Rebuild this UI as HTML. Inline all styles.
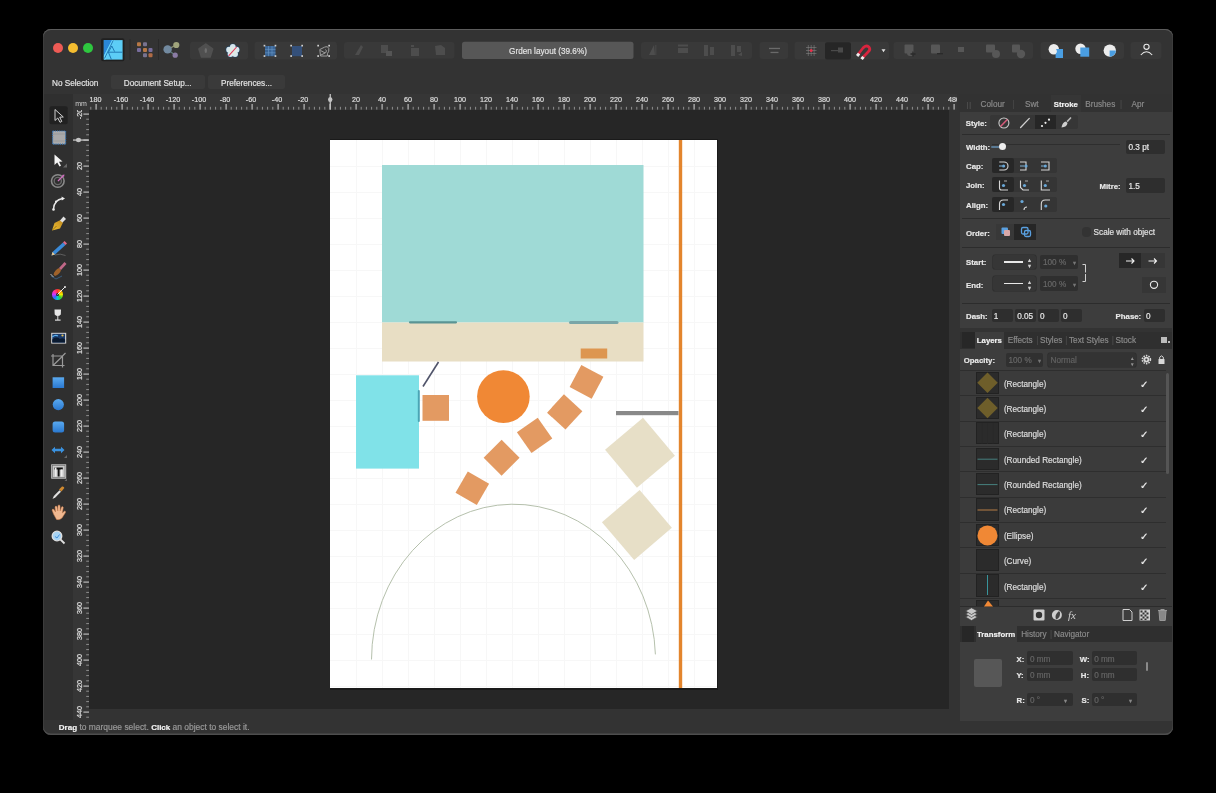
<!DOCTYPE html>
<html><head><meta charset="utf-8">
<style>
*{margin:0;padding:0;box-sizing:border-box}
html,body{width:1216px;height:793px;overflow:hidden;background:#000;font-family:"Liberation Sans",sans-serif;font-size:8.2px;color:#d8d8d8}
.a{position:absolute}
.t{white-space:nowrap;line-height:10px;-webkit-text-stroke:0.18px currentColor}
#clip{will-change:transform;position:absolute;left:0;top:0;width:1216px;height:793px;clip-path:inset(29px 43px 58px 43px round 8px)}
</style></head><body>
<div id="clip">
<div class="a" style="left:43px;top:29px;width:1130px;height:706px;background:#333"></div>
<div class="a" style="left:43px;top:29px;width:1130px;height:1px;background:#5a5a5a"></div>
<!-- traffic lights -->
<div class="a" style="left:53px;top:43px;width:10px;height:10px;border-radius:50%;background:#ee5b55"></div>
<div class="a" style="left:68px;top:43px;width:10px;height:10px;border-radius:50%;background:#f4bd30"></div>
<div class="a" style="left:83px;top:43px;width:10px;height:10px;border-radius:50%;background:#2ec73f"></div>
<!-- toolbar -->
<svg class="a" style="left:0;top:0" width="1216" height="70" viewBox="0 0 1216 70">
<defs>
<linearGradient id="afg" x1="0" y1="0" x2="1" y2="1"><stop offset="0" stop-color="#1a6fc8"/><stop offset="0.5" stop-color="#38b4ee"/><stop offset="1" stop-color="#6ad8f8"/></linearGradient>
</defs>
<!-- affinity logo -->
<rect x="101" y="38.3" width="23.5" height="23" rx="2" fill="#202020"/>
<rect x="103.8" y="40.1" width="18.8" height="19.5" fill="#5ccdf6"/>
<path d="M103.8 40.1 L112 40.1 L103.8 56 Z" fill="#2a88d8"/>
<path d="M112 40.1 L114.5 40.1 L105.5 59.6 L103.8 59.6 L103.8 56 Z" fill="#6ad4fa"/>
<g stroke="#1a6fae" stroke-width="0.9" fill="none">
<path d="M113.3 40.3 L104.5 58.5"/><path d="M111.8 46 L108.4 52.2 L111.4 59.5"/><path d="M108.4 52.2 L122.5 52.2"/><path d="M111.8 46 L114.6 51.6"/>
</g>
<!-- separators -->
<rect x="129.5" y="39" width="1" height="21" fill="#2a2a2a"/>
<rect x="158" y="39" width="1" height="21" fill="#2a2a2a"/>
<!-- pixel persona -->
<g opacity="0.8">
<rect x="137" y="42.3" width="4" height="4" rx="1" fill="#d98a4a"/>
<rect x="143" y="42.3" width="4" height="4" rx="1" fill="#8a84a8"/>
<rect x="137" y="48.1" width="4" height="4" rx="1" fill="#8a7cb8"/>
<rect x="143" y="48.1" width="4" height="4" rx="1" fill="#d98a4a"/>
<rect x="148.5" y="48.1" width="4" height="4" rx="1" fill="#8a7cb8"/>
<rect x="143" y="53.2" width="4" height="4" rx="1" fill="#8a84a8"/>
<rect x="148.5" y="53.2" width="4" height="4" rx="1" fill="#d07a4a"/>
</g>
<!-- export persona -->
<g opacity="0.85">
<line x1="167.6" y1="49.4" x2="176.3" y2="45" stroke="#9aa07a" stroke-width="1.2"/>
<line x1="167.6" y1="49.4" x2="175.2" y2="55.2" stroke="#6a8a88" stroke-width="1.2"/>
<circle cx="167.6" cy="49.4" r="4.2" fill="#7e9ab4"/>
<circle cx="176.3" cy="45" r="3.1" fill="#b4b888"/>
<circle cx="175.2" cy="55.2" r="2.6" fill="#9a88b8"/>
</g>
<!-- group bgs -->
<g fill="#393939">
<rect x="190" y="41.8" width="58" height="17.6" rx="3"/>
<rect x="254.5" y="41.8" width="82.5" height="17.6" rx="3"/>
<rect x="344" y="42" width="110.5" height="16.8" rx="3"/>
<rect x="641" y="42" width="111" height="17" rx="3"/>
<rect x="759.5" y="42" width="28.7" height="17" rx="3"/>
<rect x="794.5" y="41.8" width="94.5" height="17.8" rx="3"/>
<rect x="893.5" y="42" width="139.5" height="17" rx="3"/>
<rect x="1040.5" y="42" width="83.5" height="17" rx="3"/>
<rect x="1130.5" y="42" width="31" height="17" rx="3"/>
</g>
<!-- title box -->
<rect x="462" y="41.8" width="171.5" height="17.2" rx="2.5" fill="#575757"/>
<text x="548" y="53.6" font-size="8.2" fill="#e6e6e6" stroke="#e6e6e6" stroke-width="0.15" text-anchor="middle" font-family="Liberation Sans">Grden layout (39.6%)</text>
<!-- pentagon disabled -->
<path d="M205.80 44.20 L212.46 49.04 L209.91 56.86 L201.69 56.86 L199.14 49.04 Z" fill="#505050" stroke="#505050" stroke-width="2" stroke-linejoin="round"/>
<ellipse cx="205.8" cy="50.5" rx="1.2" ry="2.6" fill="#6e6e6e"/>
<!-- flower -->
<g><circle cx="232.80" cy="47.00" r="3.6" fill="#24405a"/><circle cx="236.51" cy="49.69" r="3.6" fill="#24405a"/><circle cx="235.09" cy="54.06" r="3.6" fill="#24405a"/><circle cx="230.51" cy="54.06" r="3.6" fill="#24405a"/><circle cx="229.09" cy="49.69" r="3.6" fill="#24405a"/><circle cx="232.8" cy="50.9" r="4.6" fill="#24405a"/><circle cx="232.80" cy="47.00" r="2.9" fill="#d6e6ee"/><circle cx="236.51" cy="49.69" r="2.9" fill="#d6e6ee"/><circle cx="235.09" cy="54.06" r="2.9" fill="#d6e6ee"/><circle cx="230.51" cy="54.06" r="2.9" fill="#d6e6ee"/><circle cx="229.09" cy="49.69" r="2.9" fill="#d6e6ee"/><circle cx="232.8" cy="50.9" r="4" fill="#dfeae6"/>
<line x1="228.6" y1="55.8" x2="236.6" y2="47" stroke="#e03a5a" stroke-width="1.1"/></g>
<!-- selection icons -->
<g>
<rect x="265" y="46" width="10.5" height="10.2" fill="#3a6494"/>
<g stroke="#6a98c8" stroke-width="0.6"><line x1="268.5" y1="46" x2="268.5" y2="56.2"/><line x1="272" y1="46" x2="272" y2="56.2"/><line x1="265" y1="49.4" x2="275.5" y2="49.4"/><line x1="265" y1="52.8" x2="275.5" y2="52.8"/></g>
<g fill="#d0d0d0"><rect x="263.6" y="44.8" width="1.7" height="1.7"/><rect x="274.6" y="44.8" width="1.7" height="1.7"/><rect x="263.6" y="55.2" width="1.7" height="1.7"/><rect x="274.6" y="55.2" width="1.7" height="1.7"/></g>
<rect x="292" y="46" width="10" height="10.2" fill="#34507a"/>
<g fill="#d0d0d0"><rect x="290.3" y="44.8" width="1.7" height="1.7"/><rect x="301.3" y="44.8" width="1.7" height="1.7"/><rect x="290.3" y="55.2" width="1.7" height="1.7"/><rect x="301.3" y="55.2" width="1.7" height="1.7"/></g>
<path d="M319.8 49.5 L324.5 47.2 Q327.8 45.8 328.8 48.5 Q329.3 51.5 327.5 53.5 L327.3 56 L320.5 56 Z M320.5 50.5 L325.2 53 L320.5 55.2 M325.5 49.5 Q327.5 50.5 325.5 53" stroke="#a8a8a8" stroke-width="0.9" fill="none"/>
<g fill="#d0d0d0"><rect x="317.3" y="44.8" width="1.7" height="1.7"/><rect x="328.3" y="44.8" width="1.7" height="1.7"/><rect x="317.3" y="55.2" width="1.7" height="1.7"/><rect x="328.3" y="55.2" width="1.7" height="1.7"/></g>
</g>
<!-- disabled arrange -->
<g fill="#4d4d4d">
<path d="M355 55 L361 45 L363 47 L359 55 Z"/>
<rect x="381" y="45" width="7" height="8"/><rect x="386" y="51" width="6" height="5" fill="#555"/>
<rect x="411" y="48" width="8" height="8"/><rect x="411" y="45" width="3" height="2"/>
<path d="M435 46 L441 45 L445 48 L445 55 L436 55 Z"/>
</g>
<!-- align group disabled -->
<g fill="#4d4d4d">
<path d="M649 55 L654 45 L655 55 Z"/><rect x="655" y="45" width="1.5" height="10" fill="#444"/>
<rect x="678" y="44.5" width="10" height="2" /><rect x="678" y="48" width="10" height="5"/>
<rect x="704" y="45" width="4" height="11"/><rect x="710" y="47" width="4" height="8"/>
<rect x="731" y="45" width="4" height="11"/><rect x="737" y="46" width="4" height="6"/><path d="M738 55 L742 52 L742 56 Z"/>
</g>
<g fill="#6a6a6a"><rect x="769" y="47.8" width="11" height="1.3"/><rect x="770.5" y="51.8" width="8" height="1.3"/></g>
<!-- snapping grid -->
<g stroke="#a8a8a8" stroke-width="0.55" opacity="0.7"><line x1="806" y1="47.5" x2="816.5" y2="47.5"/><line x1="806" y1="50.5" x2="816.5" y2="50.5"/><line x1="806" y1="53.5" x2="816.5" y2="53.5"/><line x1="808.3" y1="45" x2="808.3" y2="56"/><line x1="811.2" y1="45" x2="811.2" y2="56"/><line x1="814.1" y1="45" x2="814.1" y2="56"/></g>
<circle cx="811.2" cy="50.5" r="1.5" fill="#e8304a"/>
<rect x="825" y="42.3" width="26" height="17.3" rx="2" fill="#262626"/>
<g fill="#4a4a4a"><rect x="831" y="50" width="8" height="1.2"/><rect x="838" y="47.5" width="5" height="5"/></g>
<!-- magnet -->
<path d="M858 54.5 L863 48 Q866 44.5 869 47 Q871 49.5 868 52 L862.5 57.8" stroke="#d8243e" stroke-width="2.7" fill="none"/>
<rect x="856.7" y="53.2" width="3" height="3" fill="#eee" transform="rotate(40 858 54.6)"/>
<rect x="861" y="56.5" width="3" height="3" fill="#eee" transform="rotate(40 862.5 58)"/>
<path d="M881.5 49.3 L885.5 49.3 L883.5 52.3 Z" fill="#e0e0e0"/>
<!-- boolean disabled -->
<g fill="#575757">
<rect x="904.5" y="44.5" width="9" height="9" rx="1"/><rect x="907" y="50" width="7" height="6" rx="3"/>
<rect x="931" y="44.5" width="9" height="9" rx="1"/>
<rect x="958" y="47" width="6" height="5"/>
<rect x="986" y="44.5" width="9" height="8" rx="1"/><circle cx="996" cy="54" r="4"/>
<rect x="1012" y="44.5" width="8" height="8" rx="1"/><circle cx="1021" cy="54" r="4.2"/>
</g>
<path d="M913 51.5 v5 M910.5 54 h5" stroke="#2a2a2a" stroke-width="1.3"/>
<rect x="937" y="53" width="6" height="1.3" fill="#2a2a2a"/>
<!-- boolean white/blue -->
<circle cx="1053.8" cy="49.2" r="5.2" fill="#ececec"/>
<path d="M1056 49 L1063 49 L1063 57.9 L1055.6 57.9 L1055.6 54 Q1058 52 1056 49 Z" fill="#4a9ee2"/>
<circle cx="1080.5" cy="48.8" r="5.2" fill="#ececec"/>
<rect x="1080.3" y="47.5" width="8.9" height="9.2" fill="#4a9ee2"/>
<circle cx="1109.8" cy="50.6" r="6.2" fill="#ececec"/>
<path d="M1109.6 50.4 L1116 50.4 Q1115.5 55 1111 56.6 L1109.6 56.6 Z" fill="#4a9ee2"/>
<!-- person -->
<circle cx="1146.5" cy="46.8" r="2.6" fill="none" stroke="#e8e8e8" stroke-width="1.1"/>
<path d="M1140.8 55 Q1146.5 48.5 1152.2 55" fill="none" stroke="#e8e8e8" stroke-width="1.1"/>
</svg>
<!-- context bar -->
<div class="a t" style="left:52px;top:79px;font-size:8.2px;color:#e2e2e2;white-space:nowrap">No Selection</div>
<div class="a" style="left:111px;top:75px;width:94px;height:14px;background:#3a3a3a;border-radius:2px"></div>
<div class="a" style="left:208px;top:75px;width:77px;height:14px;background:#3a3a3a;border-radius:2px"></div>
<div class="a t" style="left:123.8px;top:79px;font-size:8.2px;color:#e2e2e2;white-space:nowrap">Document Setup...</div>
<div class="a t" style="left:221px;top:79px;font-size:8.2px;color:#e2e2e2;white-space:nowrap">Preferences...</div>

<!-- tools panel -->
<div class="a" style="left:43px;top:94px;width:30px;height:626px;background:#2f2f2f"></div>
<svg class="a" style="left:43px;top:94px" width="30" height="460" viewBox="43 94 30 460">
<defs>
<linearGradient id="pen" x1="0" y1="1" x2="1" y2="0"><stop offset="0" stop-color="#f0c030"/><stop offset="1" stop-color="#c08a20"/></linearGradient>
<linearGradient id="blu" x1="0" y1="0" x2="0" y2="1"><stop offset="0" stop-color="#5aaaf0"/><stop offset="1" stop-color="#2a78d0"/></linearGradient>
<radialGradient id="wheel"><stop offset="0" stop-color="#fff"/><stop offset="0.3" stop-color="#e0e"/><stop offset="1" stop-color="#60c"/></radialGradient>
</defs>
<!-- move tool selected -->
<rect x="49.5" y="106.3" width="18.2" height="18" rx="2" fill="#212121"/>
<path d="M55 109.5 L55 120.5 L57.8 118 L60 122.3 L61.8 121.4 L59.7 117.2 L63.3 117 Z" fill="none" stroke="#d0d0d0" stroke-width="1"/>
<!-- artboard -->
<rect x="52.6" y="131" width="13" height="13.2" fill="#aaa" stroke="#3a78b8" stroke-width="1.2" stroke-dasharray="1.2 1"/>
<g stroke="#8a8a8a" stroke-width="0.5"><line x1="53.5" y1="134" x2="64.8" y2="134"/><line x1="53.5" y1="141" x2="64.8" y2="141"/></g>
<!-- node tool -->
<path d="M54.5 154.5 L54.5 165 L57.2 162.5 L59.5 166.5 L61 165.8 L59 161.8 L62.5 161.5 Z" fill="#f4f4f4"/>
<path d="M63 167.5 L67 163.5 L67 167.5 Z" fill="#666"/>
<!-- corner tool -->
<circle cx="57.8" cy="181" r="6.3" fill="none" stroke="#8a8a8a" stroke-width="1.6"/>
<circle cx="57.8" cy="181" r="3.6" fill="none" stroke="#6a6a6a" stroke-width="1.4"/>
<circle cx="57.8" cy="181" r="1.3" fill="#333"/>
<path d="M58 181 L63.5 175.5" stroke="#d070c0" stroke-width="1.3"/><path d="M62 175 L64.5 174.5 L64 177 Z" fill="#d070c0"/>
<!-- point transform -->
<path d="M53.5 209 Q54 200 62.5 198.5" fill="none" stroke="#e8e8e8" stroke-width="1.4"/>
<path d="M61.5 196.5 L65 198.5 L61.8 200.5 Z" fill="#eee"/>
<circle cx="53.5" cy="209.5" r="1.3" fill="#eee"/><circle cx="56" cy="201.5" r="1" fill="#eee"/>
<!-- pen -->
<path d="M52 230.5 L54.5 223 L60.5 220 L63 222.5 L60 228.5 Z" fill="url(#pen)"/>
<path d="M60 220.5 L63.5 216.5 L66 219 L62.5 222.5 Z" fill="#e0e0e0"/>
<line x1="52.5" y1="230" x2="56.5" y2="226" stroke="#7a5a10" stroke-width="0.7"/>
<!-- pencil -->
<path d="M51.5 255.5 L52.5 252 L63 242.5 L65.5 245 L55 254.5 Z" fill="#3a8ad8"/>
<path d="M63 242.5 L64.5 241 L67 243.5 L65.5 245 Z" fill="#e06a8a"/>
<path d="M51.5 255.5 L52.5 252 L55 254.5 Z" fill="#e8c890"/>
<path d="M55 255 Q60 253 65.5 255.5" fill="none" stroke="#6a6a6a" stroke-width="0.8"/>
<!-- brush -->
<path d="M53.5 274.5 Q55 269.5 59 268 L61 270 Q60 274 55 276 Z" fill="#a0622a"/>
<path d="M59 268 L64.5 262 L66.5 264 L61 270 Z" fill="#c06888"/>
<path d="M51 276 L56 279 L62 276" fill="none" stroke="#3a5a7a" stroke-width="1"/>
<line x1="50.5" y1="274" x2="53.5" y2="277" stroke="#ddd" stroke-width="0.8"/>
<!-- colour wheel -->
<line x1="57" y1="295" x2="64.5" y2="287.5" stroke="#ddd" stroke-width="1"/>
<!-- wine glass fill -->
<path d="M54.5 309.5 L61 309.5 L60.8 314.5 Q57.8 317.5 54.7 314.5 Z" fill="#e6e6e6"/>
<rect x="57.3" y="316" width="1" height="4" fill="#ddd"/><rect x="55" y="319.5" width="5.6" height="1.2" fill="#ddd"/>
<!-- image -->
<rect x="51.2" y="332.8" width="15" height="10.8" fill="#d8d8d8"/>
<rect x="52.3" y="333.8" width="12.8" height="8.8" fill="#1a3a6a"/>
<path d="M52.3 339.5 Q56 336 60 339 Q62.5 337.5 65.1 339.5 L65.1 342.6 L52.3 342.6 Z" fill="#0a1a30"/>
<circle cx="62.5" cy="335.5" r="1.1" fill="#e8c050"/>
<path d="M52.3 337 Q55 334.5 58 336" stroke="#5ab0f0" stroke-width="1.2" fill="none"/>
<!-- crop -->
<path d="M53 354 L53 365.5 L64.5 365.5 M51 356 L62.5 356 L62.5 367.5 M53.3 365.2 L62.5 356.3 M62.5 356 L65.5 353" stroke="#9a9a9a" stroke-width="1.2" fill="none"/>
<!-- rect -->
<rect x="52.6" y="377.3" width="11.5" height="10.7" fill="url(#blu)"/>
<circle cx="58.3" cy="404.6" r="5.6" fill="url(#blu)"/>
<rect x="52.6" y="421.4" width="11.5" height="11" rx="2.5" fill="url(#blu)"/>
<!-- arrows -->
<path d="M51.5 450 L55 446.8 L55 448.8 L61 448.8 L61 446.8 L64.5 450 L61 453.2 L61 451.2 L55 451.2 L55 453.2 Z" fill="#3a92e0"/>
<path d="M64 458 L67 455 L67 458 Z" fill="#666"/>
<!-- T -->
<rect x="51.2" y="464.3" width="15" height="14.4" fill="#c8c8c8"/>
<rect x="52.4" y="465.5" width="12.6" height="12" fill="none" stroke="#666" stroke-width="0.6"/>
<path d="M54.5 467.5 L62.8 467.5 L62.8 469.5 L59.6 469.5 L59.6 476.5 L57.7 476.5 L57.7 469.5 L54.5 469.5 Z" fill="#111"/>
<rect x="55" y="467.5" width="1.5" height="9" fill="#eee"/><rect x="61" y="469.5" width="1.5" height="7" fill="#eee"/>
<path d="M64.5 481 L67 478.5 L67 481 Z" fill="#666"/>
<!-- eyedropper -->
<path d="M52.5 499 L53.8 496 L59.5 490.3 L61 491.8 L55.3 497.5 Z" fill="#e0e0e0"/>
<path d="M59 489.5 L62 486.5 Q64 486 64.3 488 L61.5 491.5 Z" fill="#d08a30"/>
<!-- hand -->
<path d="M53.5 514 L52 510 Q52.5 508.5 54 509.5 L55.5 512 L55 507 Q55.5 505.5 57 506.5 L57.8 511 L58 505.5 Q59 504.3 60 505.5 L60.2 511 L61.5 507 Q62.8 506 63.3 507.5 L62.3 513 L64.5 511 Q66 511 65.5 512.5 L62 518 Q59.5 520.5 56.5 519.5 Z" fill="#f0b890" stroke="#c87848" stroke-width="0.5"/>
<!-- zoom -->
<circle cx="57" cy="536" r="4.8" fill="#a8d4f4" stroke="#e0e0e0" stroke-width="1.3"/>
<path d="M55 536.5 L57 538 L59.5 534.5" stroke="#3a8ad8" stroke-width="0.9" fill="none"/>
<line x1="60.5" y1="539.5" x2="64.5" y2="543.5" stroke="#e0e0e0" stroke-width="1.8"/>
</svg>
<div class="a" style="left:51.7px;top:288.7px;width:11.6px;height:11.6px;border-radius:50%;background:conic-gradient(#f33,#f90,#ee0,#3c3,#0cc,#36f,#c3f,#f39,#f33)"></div>
<div class="a" style="left:55.7px;top:292.7px;width:3.6px;height:3.6px;border-radius:50%;background:#2a2a2a"></div>
<svg class="a" style="left:50px;top:284px" width="20" height="16" viewBox="50 284 20 16"><line x1="57.5" y1="294.5" x2="65" y2="287" stroke="#e8e8e8" stroke-width="1"/><circle cx="65" cy="287" r="1" fill="#e8e8e8"/></svg>

<!-- rulers -->
<svg class="a" style="left:73px;top:94px" width="884" height="16" viewBox="73 94 884 16">
<rect x="73" y="94" width="886" height="16" fill="#363636"/>
<g fill="#b9b9b9"><rect x="90.3" y="106.8" width="1" height="2.8" fill="#8e8e8e"/><rect x="95.5" y="104" width="1.2" height="5.6"/><rect x="100.7" y="106.8" width="1" height="2.8" fill="#8e8e8e"/><rect x="105.9" y="106.8" width="1" height="2.8" fill="#8e8e8e"/><rect x="111.1" y="106.8" width="1" height="2.8" fill="#8e8e8e"/><rect x="116.3" y="106.8" width="1" height="2.8" fill="#8e8e8e"/><rect x="121.5" y="104" width="1.2" height="5.6"/><rect x="126.7" y="106.8" width="1" height="2.8" fill="#8e8e8e"/><rect x="131.9" y="106.8" width="1" height="2.8" fill="#8e8e8e"/><rect x="137.1" y="106.8" width="1" height="2.8" fill="#8e8e8e"/><rect x="142.3" y="106.8" width="1" height="2.8" fill="#8e8e8e"/><rect x="147.5" y="104" width="1.2" height="5.6"/><rect x="152.7" y="106.8" width="1" height="2.8" fill="#8e8e8e"/><rect x="157.9" y="106.8" width="1" height="2.8" fill="#8e8e8e"/><rect x="163.1" y="106.8" width="1" height="2.8" fill="#8e8e8e"/><rect x="168.3" y="106.8" width="1" height="2.8" fill="#8e8e8e"/><rect x="173.5" y="104" width="1.2" height="5.6"/><rect x="178.7" y="106.8" width="1" height="2.8" fill="#8e8e8e"/><rect x="183.9" y="106.8" width="1" height="2.8" fill="#8e8e8e"/><rect x="189.1" y="106.8" width="1" height="2.8" fill="#8e8e8e"/><rect x="194.3" y="106.8" width="1" height="2.8" fill="#8e8e8e"/><rect x="199.5" y="104" width="1.2" height="5.6"/><rect x="204.7" y="106.8" width="1" height="2.8" fill="#8e8e8e"/><rect x="209.9" y="106.8" width="1" height="2.8" fill="#8e8e8e"/><rect x="215.1" y="106.8" width="1" height="2.8" fill="#8e8e8e"/><rect x="220.3" y="106.8" width="1" height="2.8" fill="#8e8e8e"/><rect x="225.5" y="104" width="1.2" height="5.6"/><rect x="230.7" y="106.8" width="1" height="2.8" fill="#8e8e8e"/><rect x="235.9" y="106.8" width="1" height="2.8" fill="#8e8e8e"/><rect x="241.1" y="106.8" width="1" height="2.8" fill="#8e8e8e"/><rect x="246.3" y="106.8" width="1" height="2.8" fill="#8e8e8e"/><rect x="251.5" y="104" width="1.2" height="5.6"/><rect x="256.7" y="106.8" width="1" height="2.8" fill="#8e8e8e"/><rect x="261.9" y="106.8" width="1" height="2.8" fill="#8e8e8e"/><rect x="267.1" y="106.8" width="1" height="2.8" fill="#8e8e8e"/><rect x="272.3" y="106.8" width="1" height="2.8" fill="#8e8e8e"/><rect x="277.5" y="104" width="1.2" height="5.6"/><rect x="282.7" y="106.8" width="1" height="2.8" fill="#8e8e8e"/><rect x="287.9" y="106.8" width="1" height="2.8" fill="#8e8e8e"/><rect x="293.1" y="106.8" width="1" height="2.8" fill="#8e8e8e"/><rect x="298.3" y="106.8" width="1" height="2.8" fill="#8e8e8e"/><rect x="303.5" y="104" width="1.2" height="5.6"/><rect x="308.7" y="106.8" width="1" height="2.8" fill="#8e8e8e"/><rect x="313.9" y="106.8" width="1" height="2.8" fill="#8e8e8e"/><rect x="319.1" y="106.8" width="1" height="2.8" fill="#8e8e8e"/><rect x="324.3" y="106.8" width="1" height="2.8" fill="#8e8e8e"/><rect x="329.5" y="104" width="1.2" height="5.6"/><rect x="334.7" y="106.8" width="1" height="2.8" fill="#8e8e8e"/><rect x="339.9" y="106.8" width="1" height="2.8" fill="#8e8e8e"/><rect x="345.1" y="106.8" width="1" height="2.8" fill="#8e8e8e"/><rect x="350.3" y="106.8" width="1" height="2.8" fill="#8e8e8e"/><rect x="355.5" y="104" width="1.2" height="5.6"/><rect x="360.7" y="106.8" width="1" height="2.8" fill="#8e8e8e"/><rect x="365.9" y="106.8" width="1" height="2.8" fill="#8e8e8e"/><rect x="371.1" y="106.8" width="1" height="2.8" fill="#8e8e8e"/><rect x="376.3" y="106.8" width="1" height="2.8" fill="#8e8e8e"/><rect x="381.5" y="104" width="1.2" height="5.6"/><rect x="386.7" y="106.8" width="1" height="2.8" fill="#8e8e8e"/><rect x="391.9" y="106.8" width="1" height="2.8" fill="#8e8e8e"/><rect x="397.1" y="106.8" width="1" height="2.8" fill="#8e8e8e"/><rect x="402.3" y="106.8" width="1" height="2.8" fill="#8e8e8e"/><rect x="407.5" y="104" width="1.2" height="5.6"/><rect x="412.7" y="106.8" width="1" height="2.8" fill="#8e8e8e"/><rect x="417.9" y="106.8" width="1" height="2.8" fill="#8e8e8e"/><rect x="423.1" y="106.8" width="1" height="2.8" fill="#8e8e8e"/><rect x="428.3" y="106.8" width="1" height="2.8" fill="#8e8e8e"/><rect x="433.5" y="104" width="1.2" height="5.6"/><rect x="438.7" y="106.8" width="1" height="2.8" fill="#8e8e8e"/><rect x="443.9" y="106.8" width="1" height="2.8" fill="#8e8e8e"/><rect x="449.1" y="106.8" width="1" height="2.8" fill="#8e8e8e"/><rect x="454.3" y="106.8" width="1" height="2.8" fill="#8e8e8e"/><rect x="459.5" y="104" width="1.2" height="5.6"/><rect x="464.7" y="106.8" width="1" height="2.8" fill="#8e8e8e"/><rect x="469.9" y="106.8" width="1" height="2.8" fill="#8e8e8e"/><rect x="475.1" y="106.8" width="1" height="2.8" fill="#8e8e8e"/><rect x="480.3" y="106.8" width="1" height="2.8" fill="#8e8e8e"/><rect x="485.5" y="104" width="1.2" height="5.6"/><rect x="490.7" y="106.8" width="1" height="2.8" fill="#8e8e8e"/><rect x="495.9" y="106.8" width="1" height="2.8" fill="#8e8e8e"/><rect x="501.1" y="106.8" width="1" height="2.8" fill="#8e8e8e"/><rect x="506.3" y="106.8" width="1" height="2.8" fill="#8e8e8e"/><rect x="511.5" y="104" width="1.2" height="5.6"/><rect x="516.7" y="106.8" width="1" height="2.8" fill="#8e8e8e"/><rect x="521.9" y="106.8" width="1" height="2.8" fill="#8e8e8e"/><rect x="527.1" y="106.8" width="1" height="2.8" fill="#8e8e8e"/><rect x="532.3" y="106.8" width="1" height="2.8" fill="#8e8e8e"/><rect x="537.5" y="104" width="1.2" height="5.6"/><rect x="542.7" y="106.8" width="1" height="2.8" fill="#8e8e8e"/><rect x="547.9" y="106.8" width="1" height="2.8" fill="#8e8e8e"/><rect x="553.1" y="106.8" width="1" height="2.8" fill="#8e8e8e"/><rect x="558.3" y="106.8" width="1" height="2.8" fill="#8e8e8e"/><rect x="563.5" y="104" width="1.2" height="5.6"/><rect x="568.7" y="106.8" width="1" height="2.8" fill="#8e8e8e"/><rect x="573.9" y="106.8" width="1" height="2.8" fill="#8e8e8e"/><rect x="579.1" y="106.8" width="1" height="2.8" fill="#8e8e8e"/><rect x="584.3" y="106.8" width="1" height="2.8" fill="#8e8e8e"/><rect x="589.5" y="104" width="1.2" height="5.6"/><rect x="594.7" y="106.8" width="1" height="2.8" fill="#8e8e8e"/><rect x="599.9" y="106.8" width="1" height="2.8" fill="#8e8e8e"/><rect x="605.1" y="106.8" width="1" height="2.8" fill="#8e8e8e"/><rect x="610.3" y="106.8" width="1" height="2.8" fill="#8e8e8e"/><rect x="615.5" y="104" width="1.2" height="5.6"/><rect x="620.7" y="106.8" width="1" height="2.8" fill="#8e8e8e"/><rect x="625.9" y="106.8" width="1" height="2.8" fill="#8e8e8e"/><rect x="631.1" y="106.8" width="1" height="2.8" fill="#8e8e8e"/><rect x="636.3" y="106.8" width="1" height="2.8" fill="#8e8e8e"/><rect x="641.5" y="104" width="1.2" height="5.6"/><rect x="646.7" y="106.8" width="1" height="2.8" fill="#8e8e8e"/><rect x="651.9" y="106.8" width="1" height="2.8" fill="#8e8e8e"/><rect x="657.1" y="106.8" width="1" height="2.8" fill="#8e8e8e"/><rect x="662.3" y="106.8" width="1" height="2.8" fill="#8e8e8e"/><rect x="667.5" y="104" width="1.2" height="5.6"/><rect x="672.7" y="106.8" width="1" height="2.8" fill="#8e8e8e"/><rect x="677.9" y="106.8" width="1" height="2.8" fill="#8e8e8e"/><rect x="683.1" y="106.8" width="1" height="2.8" fill="#8e8e8e"/><rect x="688.3" y="106.8" width="1" height="2.8" fill="#8e8e8e"/><rect x="693.5" y="104" width="1.2" height="5.6"/><rect x="698.7" y="106.8" width="1" height="2.8" fill="#8e8e8e"/><rect x="703.9" y="106.8" width="1" height="2.8" fill="#8e8e8e"/><rect x="709.1" y="106.8" width="1" height="2.8" fill="#8e8e8e"/><rect x="714.3" y="106.8" width="1" height="2.8" fill="#8e8e8e"/><rect x="719.5" y="104" width="1.2" height="5.6"/><rect x="724.7" y="106.8" width="1" height="2.8" fill="#8e8e8e"/><rect x="729.9" y="106.8" width="1" height="2.8" fill="#8e8e8e"/><rect x="735.1" y="106.8" width="1" height="2.8" fill="#8e8e8e"/><rect x="740.3" y="106.8" width="1" height="2.8" fill="#8e8e8e"/><rect x="745.5" y="104" width="1.2" height="5.6"/><rect x="750.7" y="106.8" width="1" height="2.8" fill="#8e8e8e"/><rect x="755.9" y="106.8" width="1" height="2.8" fill="#8e8e8e"/><rect x="761.1" y="106.8" width="1" height="2.8" fill="#8e8e8e"/><rect x="766.3" y="106.8" width="1" height="2.8" fill="#8e8e8e"/><rect x="771.5" y="104" width="1.2" height="5.6"/><rect x="776.7" y="106.8" width="1" height="2.8" fill="#8e8e8e"/><rect x="781.9" y="106.8" width="1" height="2.8" fill="#8e8e8e"/><rect x="787.1" y="106.8" width="1" height="2.8" fill="#8e8e8e"/><rect x="792.3" y="106.8" width="1" height="2.8" fill="#8e8e8e"/><rect x="797.5" y="104" width="1.2" height="5.6"/><rect x="802.7" y="106.8" width="1" height="2.8" fill="#8e8e8e"/><rect x="807.9" y="106.8" width="1" height="2.8" fill="#8e8e8e"/><rect x="813.1" y="106.8" width="1" height="2.8" fill="#8e8e8e"/><rect x="818.3" y="106.8" width="1" height="2.8" fill="#8e8e8e"/><rect x="823.5" y="104" width="1.2" height="5.6"/><rect x="828.7" y="106.8" width="1" height="2.8" fill="#8e8e8e"/><rect x="833.9" y="106.8" width="1" height="2.8" fill="#8e8e8e"/><rect x="839.1" y="106.8" width="1" height="2.8" fill="#8e8e8e"/><rect x="844.3" y="106.8" width="1" height="2.8" fill="#8e8e8e"/><rect x="849.5" y="104" width="1.2" height="5.6"/><rect x="854.7" y="106.8" width="1" height="2.8" fill="#8e8e8e"/><rect x="859.9" y="106.8" width="1" height="2.8" fill="#8e8e8e"/><rect x="865.1" y="106.8" width="1" height="2.8" fill="#8e8e8e"/><rect x="870.3" y="106.8" width="1" height="2.8" fill="#8e8e8e"/><rect x="875.5" y="104" width="1.2" height="5.6"/><rect x="880.7" y="106.8" width="1" height="2.8" fill="#8e8e8e"/><rect x="885.9" y="106.8" width="1" height="2.8" fill="#8e8e8e"/><rect x="891.1" y="106.8" width="1" height="2.8" fill="#8e8e8e"/><rect x="896.3" y="106.8" width="1" height="2.8" fill="#8e8e8e"/><rect x="901.5" y="104" width="1.2" height="5.6"/><rect x="906.7" y="106.8" width="1" height="2.8" fill="#8e8e8e"/><rect x="911.9" y="106.8" width="1" height="2.8" fill="#8e8e8e"/><rect x="917.1" y="106.8" width="1" height="2.8" fill="#8e8e8e"/><rect x="922.3" y="106.8" width="1" height="2.8" fill="#8e8e8e"/><rect x="927.5" y="104" width="1.2" height="5.6"/><rect x="932.7" y="106.8" width="1" height="2.8" fill="#8e8e8e"/><rect x="937.9" y="106.8" width="1" height="2.8" fill="#8e8e8e"/><rect x="943.1" y="106.8" width="1" height="2.8" fill="#8e8e8e"/><rect x="948.3" y="106.8" width="1" height="2.8" fill="#8e8e8e"/><rect x="953.5" y="104" width="1.2" height="5.6"/></g>
<g fill="#dedede" stroke="#dedede" stroke-width="0.2" font-size="7.2" text-anchor="middle" font-family="Liberation Sans"><text x="95.6" y="102.3">180</text><text x="121.0" y="102.3">-160</text><text x="147.0" y="102.3">-140</text><text x="173.0" y="102.3">-120</text><text x="199.0" y="102.3">-100</text><text x="225.0" y="102.3">-80</text><text x="251.0" y="102.3">-60</text><text x="277.0" y="102.3">-40</text><text x="303.0" y="102.3">-20</text><text x="356.0" y="102.3">20</text><text x="382.0" y="102.3">40</text><text x="408.0" y="102.3">60</text><text x="434.0" y="102.3">80</text><text x="460.0" y="102.3">100</text><text x="486.0" y="102.3">120</text><text x="512.0" y="102.3">140</text><text x="538.0" y="102.3">160</text><text x="564.0" y="102.3">180</text><text x="590.0" y="102.3">200</text><text x="616.0" y="102.3">220</text><text x="642.0" y="102.3">240</text><text x="668.0" y="102.3">260</text><text x="694.0" y="102.3">280</text><text x="720.0" y="102.3">300</text><text x="746.0" y="102.3">320</text><text x="772.0" y="102.3">340</text><text x="798.0" y="102.3">360</text><text x="824.0" y="102.3">380</text><text x="850.0" y="102.3">400</text><text x="876.0" y="102.3">420</text><text x="902.0" y="102.3">440</text><text x="928.0" y="102.3">460</text><text x="954.0" y="102.3">480</text></g>
<rect x="329.6" y="94" width="1.3" height="15.6" fill="#c4c4c4"/><ellipse cx="330.2" cy="99.5" rx="2.2" ry="2.6" fill="#c4c4c4"/>
</svg>
<svg class="a" style="left:73px;top:110px" width="16" height="610" viewBox="73 110 16 610">
<rect x="73" y="110" width="16" height="610" fill="#363636"/>
<g fill="#b9b9b9"><rect x="83.4" y="113.5" width="5.6" height="1.2"/><rect x="86.2" y="118.7" width="2.8" height="1" fill="#8e8e8e"/><rect x="86.2" y="123.9" width="2.8" height="1" fill="#8e8e8e"/><rect x="86.2" y="129.1" width="2.8" height="1" fill="#8e8e8e"/><rect x="86.2" y="134.3" width="2.8" height="1" fill="#8e8e8e"/><rect x="83.4" y="139.5" width="5.6" height="1.2"/><rect x="86.2" y="144.7" width="2.8" height="1" fill="#8e8e8e"/><rect x="86.2" y="149.9" width="2.8" height="1" fill="#8e8e8e"/><rect x="86.2" y="155.1" width="2.8" height="1" fill="#8e8e8e"/><rect x="86.2" y="160.3" width="2.8" height="1" fill="#8e8e8e"/><rect x="83.4" y="165.5" width="5.6" height="1.2"/><rect x="86.2" y="170.7" width="2.8" height="1" fill="#8e8e8e"/><rect x="86.2" y="175.9" width="2.8" height="1" fill="#8e8e8e"/><rect x="86.2" y="181.1" width="2.8" height="1" fill="#8e8e8e"/><rect x="86.2" y="186.3" width="2.8" height="1" fill="#8e8e8e"/><rect x="83.4" y="191.5" width="5.6" height="1.2"/><rect x="86.2" y="196.7" width="2.8" height="1" fill="#8e8e8e"/><rect x="86.2" y="201.9" width="2.8" height="1" fill="#8e8e8e"/><rect x="86.2" y="207.1" width="2.8" height="1" fill="#8e8e8e"/><rect x="86.2" y="212.3" width="2.8" height="1" fill="#8e8e8e"/><rect x="83.4" y="217.5" width="5.6" height="1.2"/><rect x="86.2" y="222.7" width="2.8" height="1" fill="#8e8e8e"/><rect x="86.2" y="227.9" width="2.8" height="1" fill="#8e8e8e"/><rect x="86.2" y="233.1" width="2.8" height="1" fill="#8e8e8e"/><rect x="86.2" y="238.3" width="2.8" height="1" fill="#8e8e8e"/><rect x="83.4" y="243.5" width="5.6" height="1.2"/><rect x="86.2" y="248.7" width="2.8" height="1" fill="#8e8e8e"/><rect x="86.2" y="253.9" width="2.8" height="1" fill="#8e8e8e"/><rect x="86.2" y="259.1" width="2.8" height="1" fill="#8e8e8e"/><rect x="86.2" y="264.3" width="2.8" height="1" fill="#8e8e8e"/><rect x="83.4" y="269.5" width="5.6" height="1.2"/><rect x="86.2" y="274.7" width="2.8" height="1" fill="#8e8e8e"/><rect x="86.2" y="279.9" width="2.8" height="1" fill="#8e8e8e"/><rect x="86.2" y="285.1" width="2.8" height="1" fill="#8e8e8e"/><rect x="86.2" y="290.3" width="2.8" height="1" fill="#8e8e8e"/><rect x="83.4" y="295.5" width="5.6" height="1.2"/><rect x="86.2" y="300.7" width="2.8" height="1" fill="#8e8e8e"/><rect x="86.2" y="305.9" width="2.8" height="1" fill="#8e8e8e"/><rect x="86.2" y="311.1" width="2.8" height="1" fill="#8e8e8e"/><rect x="86.2" y="316.3" width="2.8" height="1" fill="#8e8e8e"/><rect x="83.4" y="321.5" width="5.6" height="1.2"/><rect x="86.2" y="326.7" width="2.8" height="1" fill="#8e8e8e"/><rect x="86.2" y="331.9" width="2.8" height="1" fill="#8e8e8e"/><rect x="86.2" y="337.1" width="2.8" height="1" fill="#8e8e8e"/><rect x="86.2" y="342.3" width="2.8" height="1" fill="#8e8e8e"/><rect x="83.4" y="347.5" width="5.6" height="1.2"/><rect x="86.2" y="352.7" width="2.8" height="1" fill="#8e8e8e"/><rect x="86.2" y="357.9" width="2.8" height="1" fill="#8e8e8e"/><rect x="86.2" y="363.1" width="2.8" height="1" fill="#8e8e8e"/><rect x="86.2" y="368.3" width="2.8" height="1" fill="#8e8e8e"/><rect x="83.4" y="373.5" width="5.6" height="1.2"/><rect x="86.2" y="378.7" width="2.8" height="1" fill="#8e8e8e"/><rect x="86.2" y="383.9" width="2.8" height="1" fill="#8e8e8e"/><rect x="86.2" y="389.1" width="2.8" height="1" fill="#8e8e8e"/><rect x="86.2" y="394.3" width="2.8" height="1" fill="#8e8e8e"/><rect x="83.4" y="399.5" width="5.6" height="1.2"/><rect x="86.2" y="404.7" width="2.8" height="1" fill="#8e8e8e"/><rect x="86.2" y="409.9" width="2.8" height="1" fill="#8e8e8e"/><rect x="86.2" y="415.1" width="2.8" height="1" fill="#8e8e8e"/><rect x="86.2" y="420.3" width="2.8" height="1" fill="#8e8e8e"/><rect x="83.4" y="425.5" width="5.6" height="1.2"/><rect x="86.2" y="430.7" width="2.8" height="1" fill="#8e8e8e"/><rect x="86.2" y="435.9" width="2.8" height="1" fill="#8e8e8e"/><rect x="86.2" y="441.1" width="2.8" height="1" fill="#8e8e8e"/><rect x="86.2" y="446.3" width="2.8" height="1" fill="#8e8e8e"/><rect x="83.4" y="451.5" width="5.6" height="1.2"/><rect x="86.2" y="456.7" width="2.8" height="1" fill="#8e8e8e"/><rect x="86.2" y="461.9" width="2.8" height="1" fill="#8e8e8e"/><rect x="86.2" y="467.1" width="2.8" height="1" fill="#8e8e8e"/><rect x="86.2" y="472.3" width="2.8" height="1" fill="#8e8e8e"/><rect x="83.4" y="477.5" width="5.6" height="1.2"/><rect x="86.2" y="482.7" width="2.8" height="1" fill="#8e8e8e"/><rect x="86.2" y="487.9" width="2.8" height="1" fill="#8e8e8e"/><rect x="86.2" y="493.1" width="2.8" height="1" fill="#8e8e8e"/><rect x="86.2" y="498.3" width="2.8" height="1" fill="#8e8e8e"/><rect x="83.4" y="503.5" width="5.6" height="1.2"/><rect x="86.2" y="508.7" width="2.8" height="1" fill="#8e8e8e"/><rect x="86.2" y="513.9" width="2.8" height="1" fill="#8e8e8e"/><rect x="86.2" y="519.1" width="2.8" height="1" fill="#8e8e8e"/><rect x="86.2" y="524.3" width="2.8" height="1" fill="#8e8e8e"/><rect x="83.4" y="529.5" width="5.6" height="1.2"/><rect x="86.2" y="534.7" width="2.8" height="1" fill="#8e8e8e"/><rect x="86.2" y="539.9" width="2.8" height="1" fill="#8e8e8e"/><rect x="86.2" y="545.1" width="2.8" height="1" fill="#8e8e8e"/><rect x="86.2" y="550.3" width="2.8" height="1" fill="#8e8e8e"/><rect x="83.4" y="555.5" width="5.6" height="1.2"/><rect x="86.2" y="560.7" width="2.8" height="1" fill="#8e8e8e"/><rect x="86.2" y="565.9" width="2.8" height="1" fill="#8e8e8e"/><rect x="86.2" y="571.1" width="2.8" height="1" fill="#8e8e8e"/><rect x="86.2" y="576.3" width="2.8" height="1" fill="#8e8e8e"/><rect x="83.4" y="581.5" width="5.6" height="1.2"/><rect x="86.2" y="586.7" width="2.8" height="1" fill="#8e8e8e"/><rect x="86.2" y="591.9" width="2.8" height="1" fill="#8e8e8e"/><rect x="86.2" y="597.1" width="2.8" height="1" fill="#8e8e8e"/><rect x="86.2" y="602.3" width="2.8" height="1" fill="#8e8e8e"/><rect x="83.4" y="607.5" width="5.6" height="1.2"/><rect x="86.2" y="612.7" width="2.8" height="1" fill="#8e8e8e"/><rect x="86.2" y="617.9" width="2.8" height="1" fill="#8e8e8e"/><rect x="86.2" y="623.1" width="2.8" height="1" fill="#8e8e8e"/><rect x="86.2" y="628.3" width="2.8" height="1" fill="#8e8e8e"/><rect x="83.4" y="633.5" width="5.6" height="1.2"/><rect x="86.2" y="638.7" width="2.8" height="1" fill="#8e8e8e"/><rect x="86.2" y="643.9" width="2.8" height="1" fill="#8e8e8e"/><rect x="86.2" y="649.1" width="2.8" height="1" fill="#8e8e8e"/><rect x="86.2" y="654.3" width="2.8" height="1" fill="#8e8e8e"/><rect x="83.4" y="659.5" width="5.6" height="1.2"/><rect x="86.2" y="664.7" width="2.8" height="1" fill="#8e8e8e"/><rect x="86.2" y="669.9" width="2.8" height="1" fill="#8e8e8e"/><rect x="86.2" y="675.1" width="2.8" height="1" fill="#8e8e8e"/><rect x="86.2" y="680.3" width="2.8" height="1" fill="#8e8e8e"/><rect x="83.4" y="685.5" width="5.6" height="1.2"/><rect x="86.2" y="690.7" width="2.8" height="1" fill="#8e8e8e"/><rect x="86.2" y="695.9" width="2.8" height="1" fill="#8e8e8e"/><rect x="86.2" y="701.1" width="2.8" height="1" fill="#8e8e8e"/><rect x="86.2" y="706.3" width="2.8" height="1" fill="#8e8e8e"/><rect x="83.4" y="711.5" width="5.6" height="1.2"/><rect x="86.2" y="716.7" width="2.8" height="1" fill="#8e8e8e"/></g>
<g fill="#dedede" stroke="#dedede" stroke-width="0.2" font-size="7.2" text-anchor="middle" font-family="Liberation Sans"><text transform="translate(81.7 114.0) rotate(-90)">-20</text><text transform="translate(81.7 166.0) rotate(-90)">20</text><text transform="translate(81.7 192.0) rotate(-90)">40</text><text transform="translate(81.7 218.0) rotate(-90)">60</text><text transform="translate(81.7 244.0) rotate(-90)">80</text><text transform="translate(81.7 270.0) rotate(-90)">100</text><text transform="translate(81.7 296.0) rotate(-90)">120</text><text transform="translate(81.7 322.0) rotate(-90)">140</text><text transform="translate(81.7 348.0) rotate(-90)">160</text><text transform="translate(81.7 374.0) rotate(-90)">180</text><text transform="translate(81.7 400.0) rotate(-90)">200</text><text transform="translate(81.7 426.0) rotate(-90)">220</text><text transform="translate(81.7 452.0) rotate(-90)">240</text><text transform="translate(81.7 478.0) rotate(-90)">260</text><text transform="translate(81.7 504.0) rotate(-90)">280</text><text transform="translate(81.7 530.0) rotate(-90)">300</text><text transform="translate(81.7 556.0) rotate(-90)">320</text><text transform="translate(81.7 582.0) rotate(-90)">340</text><text transform="translate(81.7 608.0) rotate(-90)">360</text><text transform="translate(81.7 634.0) rotate(-90)">380</text><text transform="translate(81.7 660.0) rotate(-90)">400</text><text transform="translate(81.7 686.0) rotate(-90)">420</text><text transform="translate(81.7 712.0) rotate(-90)">440</text></g>
<rect x="73" y="139.4" width="15.6" height="1.3" fill="#c4c4c4"/><ellipse cx="78.5" cy="140" rx="2.6" ry="2.2" fill="#c4c4c4"/>
</svg>
<div class="a" style="left:73px;top:94px;width:16px;height:16px;background:#363636;font-size:7px;color:#cfcfcf;line-height:16px;text-align:center;padding-top:2px">mm</div>
<!-- canvas -->
<div class="a" style="left:89px;top:110px;width:860px;height:599px;background:#262626"></div>
<!-- right panel -->
<div class="a" style="left:959px;top:94px;width:214px;height:18px;background:#323232;"></div>
<div class="a" style="left:960px;top:112px;width:213px;height:216px;background:#3d3d3d;"></div>
<div class="a t" style="left:966.5px;top:99.80px;color:#555;font-size:7px;"><span style="letter-spacing:1px">||</span></div>
<div class="a t" style="left:980.6px;top:99.80px;color:#8a8a8a;font-size:8.2px;">Colour</div>
<div class="a t" style="left:1012.5px;top:99.80px;color:#4a4a4a;font-size:8.2px;">|</div>
<div class="a t" style="left:1025px;top:99.80px;color:#8a8a8a;font-size:8.2px;">Swt</div>
<div class="a" style="left:1051px;top:95px;width:30px;height:17px;background:#363636;"></div>
<div class="a t" style="left:1053.7px;top:99.80px;color:#f2f2f2;font-size:7.8px;font-weight:bold">Stroke</div>
<div class="a t" style="left:1085.2px;top:99.80px;color:#8a8a8a;font-size:8.2px;">Brushes</div>
<div class="a t" style="left:1120px;top:99.80px;color:#4a4a4a;font-size:8.2px;">|</div>
<div class="a t" style="left:1131.5px;top:99.80px;color:#8a8a8a;font-size:8.2px;">Apr</div>
<div class="a t" style="left:965.7px;top:119.10px;color:#e8e8e8;font-size:7.8px;font-weight:bold">Style:</div>
<div class="a" style="left:990px;top:115px;width:88px;height:14px;background:#363636;border-radius:2px"></div>
<div class="a" style="left:1035.2px;top:115px;width:20.4px;height:14px;background:#262626;"></div>
<div class="a" style="left:962px;top:133.8px;width:208px;height:1px;background:#2c2c2c;"></div>
<div class="a" style="left:962px;top:217.8px;width:208px;height:1px;background:#2c2c2c;"></div>
<div class="a" style="left:962px;top:246.6px;width:208px;height:1px;background:#2c2c2c;"></div>
<div class="a" style="left:962px;top:302.9px;width:208px;height:1px;background:#2c2c2c;"></div>
<div class="a t" style="left:966px;top:143.10px;color:#e8e8e8;font-size:7.8px;font-weight:bold">Width:</div>
<div class="a" style="left:992px;top:144.3px;width:128px;height:1px;background:#2e2e2e;"></div>
<div class="a" style="left:991.3px;top:145.8px;width:10px;height:2px;background:#5a7a94;border-radius:1px"></div>
<div class="a" style="left:998.7px;top:143.3px;width:7px;height:7px;background:#eeeeee;border-radius:50%"></div>
<div class="a" style="left:1126.3px;top:140px;width:38.3px;height:13.5px;background:#2e2e2e;border-radius:2px"></div>
<div class="a t" style="left:1128.5px;top:143.10px;color:#e8e8e8;font-size:8.2px;">0.3 pt</div>
<div class="a t" style="left:966px;top:161.80px;color:#e8e8e8;font-size:7.8px;font-weight:bold">Cap:</div>
<div class="a" style="left:992px;top:158px;width:65.3px;height:15px;background:#353535;border-radius:2px"></div>
<div class="a" style="left:992px;top:158px;width:21.8px;height:15px;background:#272727;border-radius:2px"></div>
<div class="a t" style="left:966px;top:180.80px;color:#e8e8e8;font-size:7.8px;font-weight:bold">Join:</div>
<div class="a" style="left:992px;top:177px;width:65.3px;height:15px;background:#353535;border-radius:2px"></div>
<div class="a" style="left:992px;top:177px;width:21.8px;height:15px;background:#272727;border-radius:2px"></div>
<div class="a t" style="left:966px;top:200.80px;color:#e8e8e8;font-size:7.8px;font-weight:bold">Align:</div>
<div class="a" style="left:992px;top:197px;width:65.3px;height:15px;background:#353535;border-radius:2px"></div>
<div class="a" style="left:992px;top:197px;width:21.8px;height:15px;background:#272727;border-radius:2px"></div>
<div class="a t" style="left:1099.4px;top:181.80px;color:#e8e8e8;font-size:7.8px;font-weight:bold">Mitre:</div>
<div class="a" style="left:1126.3px;top:178.2px;width:38.3px;height:14.5px;background:#2e2e2e;border-radius:2px"></div>
<div class="a t" style="left:1128.5px;top:181.80px;color:#e8e8e8;font-size:8.2px;">1.5</div>
<div class="a t" style="left:966px;top:228.70px;color:#e8e8e8;font-size:7.8px;font-weight:bold">Order:</div>
<div class="a" style="left:995.5px;top:224px;width:18.8px;height:16px;background:#383838;"></div>
<div class="a" style="left:1014.3px;top:224px;width:22.2px;height:16px;background:#262626;"></div>
<div class="a" style="left:1081.5px;top:227px;width:9.5px;height:9.5px;background:#333333;border-radius:4px"></div>
<div class="a t" style="left:1093.6px;top:227.80px;color:#e0e0e0;font-size:8.2px;">Scale with object</div>
<div class="a t" style="left:966px;top:258.10px;color:#e8e8e8;font-size:7.8px;font-weight:bold">Start:</div>
<div class="a t" style="left:966px;top:280.90px;color:#e8e8e8;font-size:7.8px;font-weight:bold">End:</div>
<div class="a" style="left:992.5px;top:254.7px;width:43.5px;height:14.5px;background:#363636;border-radius:2px;box-shadow:0 0 0 0.6px #2c2c2c"></div>
<div class="a" style="left:1004.2px;top:261.3px;width:18.6px;height:1.6px;background:#e8e8e8;"></div>
<div class="a" style="left:1040.4px;top:254.7px;width:37.7px;height:14.5px;background:#2f2f2f;border-radius:2px"></div>
<div class="a t" style="left:1043px;top:258.20px;color:#686868;font-size:8.2px;">100 %</div>
<div class="a t" style="left:1072.5px;top:258.20px;color:#777;font-size:6px;">&#9662;</div>
<div class="a t" style="left:1028.2px;top:255.20px;color:#cfcfcf;font-size:5.5px;">&#9652;</div>
<div class="a t" style="left:1028.2px;top:261.20px;color:#cfcfcf;font-size:5.5px;">&#9662;</div>
<div class="a" style="left:992.5px;top:276.2px;width:43.5px;height:14.5px;background:#363636;border-radius:2px;box-shadow:0 0 0 0.6px #2c2c2c"></div>
<div class="a" style="left:1004.2px;top:282.8px;width:18.6px;height:1.6px;background:#e8e8e8;"></div>
<div class="a" style="left:1040.4px;top:276.2px;width:37.7px;height:14.5px;background:#2f2f2f;border-radius:2px"></div>
<div class="a t" style="left:1043px;top:279.70px;color:#686868;font-size:8.2px;">100 %</div>
<div class="a t" style="left:1072.5px;top:279.70px;color:#777;font-size:6px;">&#9662;</div>
<div class="a t" style="left:1028.2px;top:276.70px;color:#cfcfcf;font-size:5.5px;">&#9652;</div>
<div class="a t" style="left:1028.2px;top:282.70px;color:#cfcfcf;font-size:5.5px;">&#9662;</div>
<div class="a" style="left:1119.1px;top:253px;width:22.1px;height:15px;background:#272727;"></div>
<div class="a" style="left:1141.2px;top:253px;width:23.9px;height:15px;background:#363636;"></div>
<div class="a" style="left:1142.1px;top:276.8px;width:23.9px;height:15.9px;background:#363636;"></div>
<div class="a t" style="left:966px;top:311.60px;color:#e8e8e8;font-size:7.8px;font-weight:bold">Dash:</div>
<div class="a" style="left:991.8px;top:308.6px;width:20.90000000000009px;height:13.8px;background:#2e2e2e;border-radius:2px"></div>
<div class="a t" style="left:993.8px;top:311.60px;color:#e8e8e8;font-size:8.2px;">1</div>
<div class="a" style="left:1015.2px;top:308.6px;width:20.5px;height:13.8px;background:#2e2e2e;border-radius:2px"></div>
<div class="a t" style="left:1017.2px;top:311.60px;color:#e8e8e8;font-size:8.2px;">0.05</div>
<div class="a" style="left:1038.1px;top:308.6px;width:21.300000000000182px;height:13.8px;background:#2e2e2e;border-radius:2px"></div>
<div class="a t" style="left:1040.1px;top:311.60px;color:#e8e8e8;font-size:8.2px;">0</div>
<div class="a" style="left:1061.1px;top:308.6px;width:20.90000000000009px;height:13.8px;background:#2e2e2e;border-radius:2px"></div>
<div class="a t" style="left:1063.1px;top:311.60px;color:#e8e8e8;font-size:8.2px;">0</div>
<div class="a" style="left:1143.9px;top:308.6px;width:21.199999999999818px;height:13.8px;background:#2e2e2e;border-radius:2px"></div>
<div class="a t" style="left:1145.9px;top:311.60px;color:#e8e8e8;font-size:8.2px;">0</div>
<div class="a t" style="left:1115.6px;top:311.60px;color:#e8e8e8;font-size:7.8px;font-weight:bold">Phase:</div>
<div class="a" style="left:960px;top:328px;width:213px;height:3.5px;background:#333333;"></div>
<div class="a" style="left:960px;top:331.5px;width:213px;height:17.7px;background:#2f2f2f;"></div>
<div class="a" style="left:962px;top:332px;width:12.7px;height:16px;background:#272727;"></div>
<div class="a" style="left:975px;top:331.5px;width:29px;height:17.7px;background:#3d3d3d;"></div>
<div class="a t" style="left:976.8px;top:336.30px;color:#f2f2f2;font-size:7.8px;font-weight:bold">Layers</div>
<div class="a t" style="left:1007.7px;top:336.30px;color:#8a8a8a;font-size:8.2px;">Effects</div>
<div class="a t" style="left:1036.5px;top:336.30px;color:#4a4a4a;font-size:8.2px;">|</div>
<div class="a t" style="left:1040px;top:336.30px;color:#8a8a8a;font-size:8.2px;">Styles</div>
<div class="a t" style="left:1065.3px;top:336.30px;color:#4a4a4a;font-size:8.2px;">|</div>
<div class="a t" style="left:1069px;top:336.30px;color:#8a8a8a;font-size:8.2px;">Text Styles</div>
<div class="a t" style="left:1111.8px;top:336.30px;color:#4a4a4a;font-size:8.2px;">|</div>
<div class="a t" style="left:1115.5px;top:336.30px;color:#8a8a8a;font-size:8.2px;">Stock</div>
<div class="a" style="left:1161px;top:336.5px;width:6px;height:6px;background:#bbbbbb;"></div>
<div class="a" style="left:1167.5px;top:341px;width:2px;height:2px;background:#bbbbbb;"></div>
<div class="a" style="left:960px;top:349.2px;width:213px;height:257px;background:#3d3d3d;"></div>
<div class="a t" style="left:963.8px;top:355.90px;color:#e8e8e8;font-size:7.8px;font-weight:bold">Opacity:</div>
<div class="a" style="left:1005.8px;top:352.5px;width:37.2px;height:14px;background:#303030;border-radius:2px"></div>
<div class="a t" style="left:1008.5px;top:356.10px;color:#686868;font-size:8.2px;">100 %</div>
<div class="a t" style="left:1037.5px;top:356.10px;color:#777;font-size:6px;">&#9662;</div>
<div class="a" style="left:1047.5px;top:352.5px;width:88.5px;height:14px;background:#333333;border-radius:2px;box-shadow:0 0 0 0.6px #2c2c2c"></div>
<div class="a t" style="left:1050.5px;top:356.10px;color:#626262;font-size:8.2px;">Normal</div>
<div class="a t" style="left:1130.5px;top:353.30px;color:#999;font-size:5px;">&#9652;</div>
<div class="a t" style="left:1130.5px;top:358.80px;color:#999;font-size:5px;">&#9662;</div>
<div class="a" style="left:960px;top:369.5px;width:213px;height:237px;background:#3b3b3b;"></div>
<div class="a" style="left:960px;top:370.0px;width:206px;height:1px;background:#2e2e2e;"></div>
<div class="a" style="left:976px;top:371.5px;width:23px;height:22.3px;background:#2b2b2b;border:0.6px solid #222"></div>
<div class="a t" style="left:1003.9px;top:379.70px;color:#dedede;font-size:8.2px;">(Rectangle)</div>
<div class="a t" style="left:1139.5px;top:379.70px;color:#f0f0f0;font-size:9.5px;">&#10003;</div>
<div class="a" style="left:960px;top:395.35px;width:206px;height:1px;background:#2e2e2e;"></div>
<div class="a" style="left:976px;top:396.85px;width:23px;height:22.3px;background:#2b2b2b;border:0.6px solid #222"></div>
<div class="a t" style="left:1003.9px;top:405.05px;color:#dedede;font-size:8.2px;">(Rectangle)</div>
<div class="a t" style="left:1139.5px;top:405.05px;color:#f0f0f0;font-size:9.5px;">&#10003;</div>
<div class="a" style="left:960px;top:420.7px;width:206px;height:1px;background:#2e2e2e;"></div>
<div class="a" style="left:976px;top:422.2px;width:23px;height:22.3px;background:#2b2b2b;border:0.6px solid #222"></div>
<div class="a t" style="left:1003.9px;top:430.40px;color:#dedede;font-size:8.2px;">(Rectangle)</div>
<div class="a t" style="left:1139.5px;top:430.40px;color:#f0f0f0;font-size:9.5px;">&#10003;</div>
<div class="a" style="left:960px;top:446.05px;width:206px;height:1px;background:#2e2e2e;"></div>
<div class="a" style="left:976px;top:447.55px;width:23px;height:22.3px;background:#2b2b2b;border:0.6px solid #222"></div>
<div class="a t" style="left:1003.9px;top:455.75px;color:#dedede;font-size:8.2px;">(Rounded Rectangle)</div>
<div class="a t" style="left:1139.5px;top:455.75px;color:#f0f0f0;font-size:9.5px;">&#10003;</div>
<div class="a" style="left:960px;top:471.4px;width:206px;height:1px;background:#2e2e2e;"></div>
<div class="a" style="left:976px;top:472.9px;width:23px;height:22.3px;background:#2b2b2b;border:0.6px solid #222"></div>
<div class="a t" style="left:1003.9px;top:481.10px;color:#dedede;font-size:8.2px;">(Rounded Rectangle)</div>
<div class="a t" style="left:1139.5px;top:481.10px;color:#f0f0f0;font-size:9.5px;">&#10003;</div>
<div class="a" style="left:960px;top:496.75px;width:206px;height:1px;background:#2e2e2e;"></div>
<div class="a" style="left:976px;top:498.25px;width:23px;height:22.3px;background:#2b2b2b;border:0.6px solid #222"></div>
<div class="a t" style="left:1003.9px;top:506.45px;color:#dedede;font-size:8.2px;">(Rectangle)</div>
<div class="a t" style="left:1139.5px;top:506.45px;color:#f0f0f0;font-size:9.5px;">&#10003;</div>
<div class="a" style="left:960px;top:522.1px;width:206px;height:1px;background:#2e2e2e;"></div>
<div class="a" style="left:976px;top:523.6px;width:23px;height:22.3px;background:#2b2b2b;border:0.6px solid #222"></div>
<div class="a t" style="left:1003.9px;top:531.80px;color:#dedede;font-size:8.2px;">(Ellipse)</div>
<div class="a t" style="left:1139.5px;top:531.80px;color:#f0f0f0;font-size:9.5px;">&#10003;</div>
<div class="a" style="left:960px;top:547.45px;width:206px;height:1px;background:#2e2e2e;"></div>
<div class="a" style="left:976px;top:548.95px;width:23px;height:22.3px;background:#2b2b2b;border:0.6px solid #222"></div>
<div class="a t" style="left:1003.9px;top:557.15px;color:#dedede;font-size:8.2px;">(Curve)</div>
<div class="a t" style="left:1139.5px;top:557.15px;color:#f0f0f0;font-size:9.5px;">&#10003;</div>
<div class="a" style="left:960px;top:572.8px;width:206px;height:1px;background:#2e2e2e;"></div>
<div class="a" style="left:976px;top:574.3px;width:23px;height:22.3px;background:#2b2b2b;border:0.6px solid #222"></div>
<div class="a t" style="left:1003.9px;top:582.50px;color:#dedede;font-size:8.2px;">(Rectangle)</div>
<div class="a t" style="left:1139.5px;top:582.50px;color:#f0f0f0;font-size:9.5px;">&#10003;</div>
<div class="a" style="left:960px;top:598.15px;width:206px;height:1px;background:#2e2e2e;"></div>
<div class="a" style="left:976px;top:599.65px;width:23px;height:22.3px;background:#2b2b2b;border:0.6px solid #222"></div>
<div class="a" style="left:1165.5px;top:373.4px;width:3px;height:100.4px;background:#555555;border-radius:2px"></div>
<div class="a" style="left:960px;top:606.5px;width:213px;height:19px;background:#3d3d3d;"></div>
<div class="a" style="left:960px;top:606px;width:213px;height:1px;background:#2c2c2c;"></div>
<div class="a" style="left:960px;top:625.7px;width:213px;height:16.4px;background:#2f2f2f;"></div>
<div class="a" style="left:962px;top:626px;width:12px;height:16px;background:#272727;"></div>
<div class="a" style="left:975.5px;top:625.7px;width:41px;height:16.4px;background:#3d3d3d;"></div>
<div class="a t" style="left:977px;top:630.30px;color:#f2f2f2;font-size:7.8px;font-weight:bold">Transform</div>
<div class="a t" style="left:1021.2px;top:630.30px;color:#8a8a8a;font-size:8.2px;">History</div>
<div class="a t" style="left:1050px;top:630.30px;color:#4a4a4a;font-size:8.2px;">|</div>
<div class="a t" style="left:1054.1px;top:630.30px;color:#8a8a8a;font-size:8.2px;">Navigator</div>
<div class="a" style="left:960px;top:642.1px;width:213px;height:79px;background:#3d3d3d;"></div>
<div class="a" style="left:974px;top:658.6px;width:27.7px;height:28.8px;background:#575757;border-radius:2px"></div>
<div class="a t" style="left:1016.5px;top:654.90px;color:#e8e8e8;font-size:7.8px;font-weight:bold">X:</div>
<div class="a" style="left:1027.4px;top:651.4px;width:45.3px;height:13.4px;background:#2f2f2f;border-radius:2px"></div>
<div class="a t" style="left:1029.9px;top:654.90px;color:#666;font-size:8.2px;">0 mm</div>
<div class="a t" style="left:1079.8px;top:654.90px;color:#e8e8e8;font-size:7.8px;font-weight:bold">W:</div>
<div class="a" style="left:1091.7px;top:651.4px;width:45.3px;height:13.4px;background:#2f2f2f;border-radius:2px"></div>
<div class="a t" style="left:1094.2px;top:654.90px;color:#666;font-size:8.2px;">0 mm</div>
<div class="a t" style="left:1016.5px;top:671.30px;color:#e8e8e8;font-size:7.8px;font-weight:bold">Y:</div>
<div class="a" style="left:1027.4px;top:667.8px;width:45.3px;height:13.4px;background:#2f2f2f;border-radius:2px"></div>
<div class="a t" style="left:1029.9px;top:671.30px;color:#666;font-size:8.2px;">0 mm</div>
<div class="a t" style="left:1080.8px;top:671.30px;color:#e8e8e8;font-size:7.8px;font-weight:bold">H:</div>
<div class="a" style="left:1091.7px;top:667.8px;width:45.3px;height:13.4px;background:#2f2f2f;border-radius:2px"></div>
<div class="a t" style="left:1094.2px;top:671.30px;color:#666;font-size:8.2px;">0 mm</div>
<div class="a t" style="left:1016.5px;top:696.00px;color:#e8e8e8;font-size:7.8px;font-weight:bold">R:</div>
<div class="a" style="left:1027.4px;top:692.5px;width:45.3px;height:13.4px;background:#2f2f2f;border-radius:2px"></div>
<div class="a t" style="left:1029.9px;top:696.00px;color:#666;font-size:8.2px;">0 &deg;</div>
<div class="a t" style="left:1064.4px;top:696.00px;color:#888;font-size:6px;">&#9662;</div>
<div class="a t" style="left:1081.5px;top:696.00px;color:#e8e8e8;font-size:7.8px;font-weight:bold">S:</div>
<div class="a" style="left:1091.7px;top:692.5px;width:45.3px;height:13.4px;background:#2f2f2f;border-radius:2px"></div>
<div class="a t" style="left:1094.2px;top:696.00px;color:#666;font-size:8.2px;">0 &deg;</div>
<div class="a t" style="left:1128.7px;top:696.00px;color:#888;font-size:6px;">&#9662;</div>
<div class="a" style="left:1146px;top:662px;width:2.4px;height:9px;background:#8a8a8a;border-radius:1px"></div>
<svg class="a" style="left:0;top:0" width="1216" height="793" viewBox="0 0 1216 793">
<!-- style icons -->
<circle cx="1003.9" cy="123" r="5" fill="none" stroke="#c8c8c8" stroke-width="1.1"/>
<line x1="1000.5" y1="126.5" x2="1007.3" y2="119.5" stroke="#d85a7a" stroke-width="1.5"/>
<line x1="1020.6" y1="127.5" x2="1029.3" y2="118.4" stroke="#d0d0d0" stroke-width="1.3" stroke-linecap="round"/>
<g fill="#eee"><circle cx="1042" cy="126" r="1.1"/><circle cx="1045.5" cy="122.8" r="1.1"/><circle cx="1049" cy="119.7" r="1.1"/></g>
<path d="M1061.5 127.5 Q1062.5 122 1066 121.5 L1067.5 123 Q1067 127 1061.5 127.5 Z" fill="#cfcfcf"/>
<path d="M1066.5 121 L1070.5 117 L1071.5 118 L1067.7 122.2 Z" fill="#bbb"/>
<!-- cap icons -->
<g fill="none" stroke="#d6d6d6" stroke-width="1.1">
<path d="M999.3 162 L1004 162 A4 4 0 0 1 1004 170 L999.3 170"/>
<path d="M1020 162 L1026 162 L1026 170 L1020 170"/>
<path d="M1041 162 L1049 162 L1049 170 L1041 170"/>
</g>
<g fill="#6aa8d8"><circle cx="1003.6" cy="166" r="1.6"/><circle cx="1026" cy="166" r="1.6"/><circle cx="1045.3" cy="166" r="1.6"/></g>
<g stroke="#6a8aa0" stroke-width="1.5"><line x1="999" y1="166" x2="1002" y2="166"/><line x1="1020" y1="166" x2="1024.5" y2="166"/><line x1="1041" y1="166" x2="1043.8" y2="166"/></g>
<!-- join icons -->
<g fill="none" stroke="#d6d6d6" stroke-width="1.1">
<path d="M999.5 180.5 L999.5 188 Q999.5 190 1001.5 190 L1008 190"/>
<path d="M1020.5 180.5 L1020.5 187.5 L1023 190 L1029 190"/>
<path d="M1041.3 180.5 L1041.3 190 L1050 190"/>
</g>
<g fill="#6aa8d8"><circle cx="1003.5" cy="185.5" r="1.6"/><circle cx="1024.5" cy="185.5" r="1.6"/><circle cx="1045.3" cy="185.5" r="1.6"/></g>
<g fill="#aaa"><rect x="1004" y="180.5" width="3" height="1"/><rect x="1025" y="180.5" width="3" height="1"/><rect x="1046" y="180.5" width="3" height="1"/></g>
<!-- align icons -->
<g fill="none" stroke="#d6d6d6" stroke-width="1.1">
<path d="M999.5 210 L999.5 204 Q999.5 200 1003.5 200 L1008 200"/>
<path d="M1024 210 Q1024 207 1027 207"/>
<path d="M1041.3 210 L1041.3 204 Q1041.3 200 1045.3 200 L1050 200"/>
</g>
<g fill="#6aa8d8"><circle cx="1003.5" cy="204.5" r="1.6"/><circle cx="1022" cy="201.5" r="1.6"/><circle cx="1045.8" cy="206" r="1.6"/></g>
<!-- order icons -->
<rect x="1001.5" y="227.5" width="6.5" height="6.5" rx="1" fill="#5aa0e0"/><rect x="1004" y="230" width="6" height="6" rx="1" fill="#d8a8a8"/>
<rect x="1021.5" y="227.5" width="6.5" height="6.5" rx="1.5" fill="none" stroke="#5aa0e0" stroke-width="1.3"/><rect x="1024.5" y="230.5" width="6" height="6" rx="1.5" fill="none" stroke="#5aa0e0" stroke-width="1.3"/>
<!-- arrows -->
<g stroke="#f0f0f0" stroke-width="1.1" fill="none"><path d="M1126 261 L1134 261 M1131.5 258.5 L1134 261 L1131.5 263.5"/><path d="M1148.5 261 L1156.5 261 M1154 258.5 L1156.5 261 L1154 263.5"/></g>
<circle cx="1154" cy="284.8" r="3.6" fill="none" stroke="#e8e8e8" stroke-width="1.1"/>
<!-- link bracket -->
<path d="M1082.5 264.5 L1085.5 264.5 L1085.5 272.5 M1085.5 274 L1085.5 281.5 L1082.5 281.5" fill="none" stroke="#d0d0d0" stroke-width="1"/>
<!-- layers gear/lock -->
<circle cx="1146.4" cy="359.6" r="4" fill="none" stroke="#d8d8d8" stroke-width="1.6" stroke-dasharray="1.5 1.05"/><circle cx="1146.4" cy="359.6" r="2.9" fill="#d8d8d8"/><circle cx="1146.4" cy="359.6" r="1.1" fill="#3d3d3d"/>
<rect x="1158.5" y="359" width="6" height="5" rx="0.6" fill="#d8d8d8"/><path d="M1159.7 359 L1159.7 357.2 Q1161.5 354.5 1163.3 357.2 L1163.3 359" fill="none" stroke="#d8d8d8" stroke-width="1"/>
<!-- layer thumbnails -->
<rect x="-7.25" y="-7.25" width="14.5" height="14.5" fill="#6e5e2a" transform="translate(987.5 382.7) rotate(45)"/>
<rect x="-7.25" y="-7.25" width="14.5" height="14.5" fill="#6e5e2a" transform="translate(987.5 408) rotate(45)"/>
<g stroke="#2a2a2a" stroke-width="0.8"><line x1="982" y1="423" x2="982" y2="444"/><line x1="987.5" y1="423" x2="987.5" y2="444"/><line x1="993" y1="423" x2="993" y2="444"/></g>
<line x1="977.5" y1="459.2" x2="997.5" y2="459.2" stroke="#4a8a88" stroke-width="0.9"/>
<line x1="977.5" y1="484.6" x2="997.5" y2="484.6" stroke="#4a8a88" stroke-width="0.9"/>
<line x1="977.5" y1="510" x2="997.5" y2="510" stroke="#7a5a3a" stroke-width="1.8"/>
<circle cx="987.5" cy="535.4" r="10" fill="#f08835"/>
<line x1="987.5" y1="575" x2="987.5" y2="595" stroke="#3aa0a8" stroke-width="0.9"/>
<path d="M984 606.5 L988 600.5 L993 606.5 Z" fill="#f08835"/>
<!-- bottom toolbar -->
<g fill="#c8c8c8" stroke="#3d3d3d" stroke-width="0.7"><path d="M965.5 617 L971.5 613.8 L977.5 617 L971.5 620.5 Z"/><path d="M965.5 614 L971.5 610.8 L977.5 614 L971.5 617.5 Z"/><path d="M965.5 611 L971.5 607.8 L977.5 611 L971.5 614.5 Z"/></g>
<rect x="1033.5" y="609.5" width="11" height="11" rx="1" fill="#cfcfcf"/><circle cx="1039" cy="615" r="3.2" fill="#333"/>
<circle cx="1056.9" cy="615" r="5" fill="#cfcfcf"/><path d="M1059 611 Q1054 615 1056 619.5 Q1060.5 618 1060 612.5 Z" fill="#444"/>
<text x="1068" y="619" font-family="Liberation Serif" font-style="italic" font-size="11" fill="#cfcfcf">fx</text>
<path d="M1123 609.5 L1129.5 609.5 L1132 612 L1132 620.5 L1123 620.5 Z" fill="none" stroke="#cfcfcf" stroke-width="1"/>
<rect x="1139.5" y="609.5" width="10.5" height="11" fill="#cfcfcf"/>
<g fill="#333"><rect x="1140.5" y="610.5" width="2" height="2"/><rect x="1144.5" y="610.5" width="2" height="2"/><rect x="1142.5" y="612.5" width="2" height="2"/><rect x="1146.5" y="612.5" width="2" height="2"/><rect x="1140.5" y="614.5" width="2" height="2"/><rect x="1144.5" y="614.5" width="2" height="2"/><rect x="1142.5" y="616.5" width="2" height="2"/><rect x="1146.5" y="616.5" width="2" height="2"/><rect x="1140.5" y="618.5" width="2" height="1.5"/><rect x="1144.5" y="618.5" width="2" height="1.5"/></g>
<path d="M1158 610.5 L1167 610.5 M1159 611 L1159.8 620.5 L1165.2 620.5 L1166 611" fill="#888" stroke="#999" stroke-width="1"/>
<rect x="1160.5" y="609" width="4" height="1.5" fill="#999"/>
</svg>

<!-- document -->
<svg class="a" style="left:0;top:0" width="1216" height="793" viewBox="0 0 1216 793">
<rect x="330" y="139" width="388" height="551" fill="#1a1a1a"/>
<rect x="330" y="140" width="387" height="548" fill="#fff"/>
<g stroke="#f7f7f7" stroke-width="1"><line x1="356.5" y1="140" x2="356.5" y2="688"/><line x1="382.5" y1="140" x2="382.5" y2="688"/><line x1="408.5" y1="140" x2="408.5" y2="688"/><line x1="434.5" y1="140" x2="434.5" y2="688"/><line x1="460.5" y1="140" x2="460.5" y2="688"/><line x1="486.5" y1="140" x2="486.5" y2="688"/><line x1="512.5" y1="140" x2="512.5" y2="688"/><line x1="538.5" y1="140" x2="538.5" y2="688"/><line x1="564.5" y1="140" x2="564.5" y2="688"/><line x1="590.5" y1="140" x2="590.5" y2="688"/><line x1="616.5" y1="140" x2="616.5" y2="688"/><line x1="642.5" y1="140" x2="642.5" y2="688"/><line x1="668.5" y1="140" x2="668.5" y2="688"/><line x1="694.5" y1="140" x2="694.5" y2="688"/><line x1="330" y1="166.5" x2="717" y2="166.5"/><line x1="330" y1="192.5" x2="717" y2="192.5"/><line x1="330" y1="218.5" x2="717" y2="218.5"/><line x1="330" y1="244.5" x2="717" y2="244.5"/><line x1="330" y1="270.5" x2="717" y2="270.5"/><line x1="330" y1="296.5" x2="717" y2="296.5"/><line x1="330" y1="322.5" x2="717" y2="322.5"/><line x1="330" y1="348.5" x2="717" y2="348.5"/><line x1="330" y1="374.5" x2="717" y2="374.5"/><line x1="330" y1="400.5" x2="717" y2="400.5"/><line x1="330" y1="426.5" x2="717" y2="426.5"/><line x1="330" y1="452.5" x2="717" y2="452.5"/><line x1="330" y1="478.5" x2="717" y2="478.5"/><line x1="330" y1="504.5" x2="717" y2="504.5"/><line x1="330" y1="530.5" x2="717" y2="530.5"/><line x1="330" y1="556.5" x2="717" y2="556.5"/><line x1="330" y1="582.5" x2="717" y2="582.5"/><line x1="330" y1="608.5" x2="717" y2="608.5"/><line x1="330" y1="634.5" x2="717" y2="634.5"/><line x1="330" y1="660.5" x2="717" y2="660.5"/><line x1="330" y1="686.5" x2="717" y2="686.5"/></g>
<rect x="382" y="165" width="261.5" height="157.5" fill="#9fdad6"/>
<rect x="382" y="322.5" width="261.5" height="39" fill="#e8dec4"/>
<line x1="410" y1="322.3" x2="456" y2="322.3" stroke="#5a9494" stroke-width="2.2" stroke-linecap="round"/>
<line x1="570.5" y1="322.5" x2="617" y2="322.5" stroke="#7aa6a8" stroke-width="3" stroke-linecap="round"/>
<rect x="580.7" y="348.5" width="26.5" height="10" fill="#dd9650"/>
<rect x="356" y="375.3" width="63" height="93.3" fill="#80e2e8"/>
<line x1="418.8" y1="391" x2="418.8" y2="421" stroke="#4aa5b5" stroke-width="2" stroke-linecap="round"/>
<line x1="438.5" y1="362" x2="423" y2="386.5" stroke="#50546a" stroke-width="1.6"/>
<rect x="422.5" y="395" width="26.5" height="25.8" fill="#e39a62"/>
<circle cx="503.4" cy="396.6" r="26.3" fill="#f08835"/>
<g fill="#e39a62">
<rect x="-12.5" y="-12.5" width="25" height="25" transform="translate(586.5 381.8) rotate(28)"/>
<rect x="-12.5" y="-12.5" width="25" height="25" transform="translate(564.7 411.9) rotate(42.5)"/>
<rect x="-12.7" y="-12.7" width="25.4" height="25.4" transform="translate(534.6 435.4) rotate(55)"/>
<rect x="-12.7" y="-12.7" width="25.4" height="25.4" transform="translate(501.6 457.7) rotate(45)"/>
<rect x="-12.3" y="-12.3" width="24.6" height="24.6" transform="translate(472.3 488.3) rotate(30)"/>
</g>
<g fill="#e7dfc7">
<rect x="-24.8" y="-24.8" width="49.6" height="49.6" transform="translate(640 452.7) rotate(50)"/>
<rect x="-24.8" y="-24.8" width="49.6" height="49.6" transform="translate(636.9 525) rotate(49.5)"/>
</g>
<rect x="616" y="411" width="62.5" height="4.2" fill="#898989"/>
<rect x="678.8" y="140" width="3.4" height="548" fill="#e3852d"/>
<path d="M371.5 659.5 A142 156 0 0 1 655.4 654.4" fill="none" stroke="#adb9a3" stroke-width="0.9"/>
</svg>
<!-- status -->
<div class="a t" style="left:58.8px;top:722.3px;color:#9a9a9a;font-size:8.45px"><b style="color:#f4f4f4;font-size:8px">Drag</b> to marquee select. <b style="color:#f4f4f4;font-size:8px">Click</b> an object to select it.</div>
</div>
<div class="a" style="left:43px;top:29px;width:1130px;height:706px;border-radius:8px;box-shadow:inset 0 1px 0 #5c5c5c, inset 0 -1.5px 0 #4e4e4e, inset 0 0 0 1px #3c3c3c;pointer-events:none"></div>
</body></html>
